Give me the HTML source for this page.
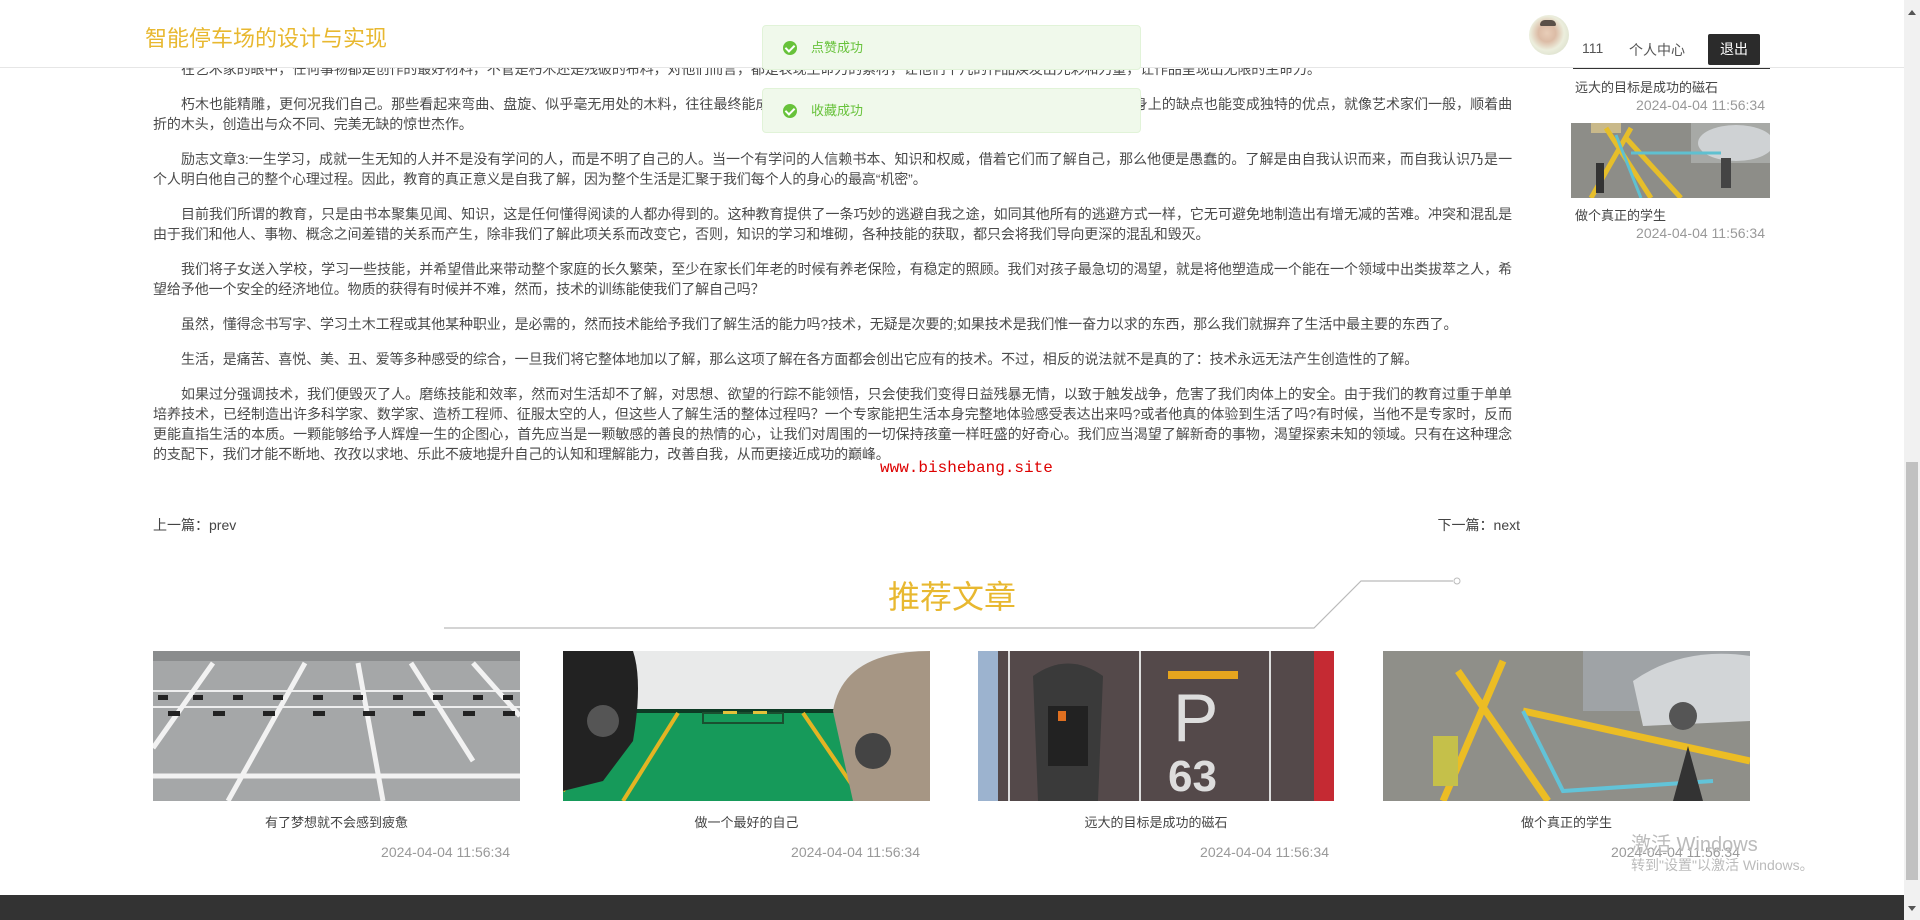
<!DOCTYPE html>
<html><head><meta charset="utf-8">
<style>
*{margin:0;padding:0;box-sizing:border-box}
body{width:1920px;height:920px;overflow:hidden;background:#fff;font-family:"Liberation Sans","Noto Sans CJK SC",sans-serif;position:relative;color:#444}
.hdr{position:absolute;left:0;top:0;width:1904px;height:68px;background:#fff;border-bottom:1px solid #e6e6e6;z-index:5}
.title{position:absolute;left:145px;top:21px;font-size:22px;color:#e8b830;letter-spacing:0}
.av{position:absolute;left:1529px;top:15px;width:40px;height:40px;border-radius:50%;background:radial-gradient(circle at 45% 45%,#e8cdb8 0,#dcbca6 28%,#eceedd 55%,#cfd5c0 100%);overflow:hidden}
.av:before{content:"";position:absolute;left:11px;top:5px;width:16px;height:6px;background:#5a5048;border-radius:8px 8px 2px 2px}
.u{position:absolute;top:40px;font-size:14px;color:#555}
.out{position:absolute;left:1708px;top:34px;width:52px;height:31px;background:#2b2b2b;color:#fff;font-size:14px;text-align:center;line-height:31px;border-radius:2px}
.toast{position:absolute;left:762px;width:379px;height:45px;background:#f0f9eb;border:1px solid #e1f3d8;border-radius:4px;z-index:10;font-size:13px;color:#67c23a;line-height:43px;padding-left:48px}
.toast i{position:absolute;left:20px;top:15px;width:14px;height:14px;border-radius:50%;background:#67c23a}
.toast i:after{content:"";position:absolute;left:4px;top:2px;width:4px;height:7px;border:solid #fff;border-width:0 2px 2px 0;transform:rotate(45deg)}
.content{position:absolute;left:153px;top:59px;width:1359px;font-size:14px;line-height:20px;color:#4a4a4a;text-align:justify;letter-spacing:-0.1px}
.content p{text-indent:2em;margin-bottom:15px}
.side{position:absolute;left:1570px;top:0;width:200px;font-size:13px;color:#444}
.red{position:absolute;left:880px;top:459px;font-family:"Liberation Mono",monospace;font-size:16px;color:#d00}
.nav{position:absolute;top:515px;font-size:14px;color:#444}
.rt{position:absolute;left:888px;top:577px;font-size:32px;color:#e8b830;line-height:40px}
.card{position:absolute;top:651px;height:150px;overflow:hidden}
.ct{position:absolute;top:812px;font-size:13px;color:#444;text-align:center}
.cd{position:absolute;top:844px;font-size:14px;color:#999;text-align:right}
.foot{position:absolute;left:0;top:895px;width:1904px;height:25px;background:#333}
.sb{position:absolute;left:1904px;top:0;width:16px;height:920px;background:#f1f1f1}
.th{position:absolute;left:1906px;top:462px;width:12px;height:418px;background:#c1c1c1}
.wm{position:absolute;left:1631px;color:#bbb}
</style></head><body>

<div class="content">
<p>在艺术家的眼中，任何事物都是创作的最好材料，不管是朽木还是残破的布料，对他们而言，都是表现生命力的素材，让他们平凡的作品焕发出光彩和力量，让作品呈现出无限的生命力。</p>
<p>朽木也能精雕，更何况我们自己。那些看起来弯曲、盘旋、似乎毫无用处的木料，往往最终能成为艺术家手中的珍品。对我们来说，只要用心雕琢，每个人身上的缺点也能变成独特的优点，就像艺术家们一般，顺着曲折的木头，创造出与众不同、完美无缺的惊世杰作。</p>
<p>励志文章3:一生学习，成就一生无知的人并不是没有学问的人，而是不明了自己的人。当一个有学问的人信赖书本、知识和权威，借着它们而了解自己，那么他便是愚蠢的。了解是由自我认识而来，而自我认识乃是一个人明白他自己的整个心理过程。因此，教育的真正意义是自我了解，因为整个生活是汇聚于我们每个人的身心的最高“机密”。</p>
<p>目前我们所谓的教育，只是由书本聚集见闻、知识，这是任何懂得阅读的人都办得到的。这种教育提供了一条巧妙的逃避自我之途，如同其他所有的逃避方式一样，它无可避免地制造出有增无减的苦难。冲突和混乱是由于我们和他人、事物、概念之间差错的关系而产生，除非我们了解此项关系而改变它，否则，知识的学习和堆砌，各种技能的获取，都只会将我们导向更深的混乱和毁灭。</p>
<p>我们将子女送入学校，学习一些技能，并希望借此来带动整个家庭的长久繁荣，至少在家长们年老的时候有养老保险，有稳定的照顾。我们对孩子最急切的渴望，就是将他塑造成一个能在一个领域中出类拔萃之人，希望给予他一个安全的经济地位。物质的获得有时候并不难，然而，技术的训练能使我们了解自己吗？</p>
<p>虽然，懂得念书写字、学习土木工程或其他某种职业，是必需的，然而技术能给予我们了解生活的能力吗?技术，无疑是次要的;如果技术是我们惟一奋力以求的东西，那么我们就摒弃了生活中最主要的东西了。</p>
<p>生活，是痛苦、喜悦、美、丑、爱等多种感受的综合，一旦我们将它整体地加以了解，那么这项了解在各方面都会创出它应有的技术。不过，相反的说法就不是真的了：技术永远无法产生创造性的了解。</p>
<p>如果过分强调技术，我们便毁灭了人。磨练技能和效率，然而对生活却不了解，对思想、欲望的行踪不能领悟，只会使我们变得日益残暴无情，以致于触发战争，危害了我们肉体上的安全。由于我们的教育过重于单单培养技术，已经制造出许多科学家、数学家、造桥工程师、征服太空的人，但这些人了解生活的整体过程吗？一个专家能把生活本身完整地体验感受表达出来吗?或者他真的体验到生活了吗?有时候，当他不是专家时，反而更能直指生活的本质。一颗能够给予人辉煌一生的企图心，首先应当是一颗敏感的善良的热情的心，让我们对周围的一切保持孩童一样旺盛的好奇心。我们应当渴望了解新奇的事物，渴望探索未知的领域。只有在这种理念的支配下，我们才能不断地、孜孜以求地、乐此不疲地提升自己的认知和理解能力，改善自我，从而更接近成功的巅峰。</p>
</div>
<div class="red">www.bishebang.site</div>

<div class="side">
<div style="position:absolute;left:3px;top:67px;width:197px;height:2px;background:#333"></div>
<div style="position:absolute;left:5px;top:77px">远大的目标是成功的磁石</div>
<div style="position:absolute;right:5px;top:97px;color:#999;font-size:14px">2024-04-04 11:56:34</div>
<svg style="position:absolute;left:1px;top:123px" width="199" height="75" viewBox="0 0 199 75">
<rect width="199" height="75" fill="#8d8d88"/><rect x="120" y="0" width="79" height="40" fill="#a7a9a6"/>
<ellipse cx="165" cy="20" rx="38" ry="18" fill="#cfd2d4"/><rect x="20" y="0" width="30" height="10" fill="#c9b98a"/>
<path d="M20 75 L60 5 M35 5 L80 75 M55 15 L110 75" stroke="#e6be2a" stroke-width="5" fill="none"/>
<path d="M45 12 L70 75 M60 30 L150 30" stroke="#5fc0d0" stroke-width="3" fill="none"/>
<rect x="25" y="40" width="8" height="30" fill="#333"/><rect x="150" y="35" width="10" height="30" fill="#444"/></svg>
<div style="position:absolute;left:5px;top:205px">做个真正的学生</div>
<div style="position:absolute;right:5px;top:225px;color:#999;font-size:14px">2024-04-04 11:56:34</div>
</div>

<div class="nav" style="left:153px">上一篇：prev</div>
<div class="nav" style="right:400px">下一篇：next</div>

<div class="rt">推荐文章</div>
<svg style="position:absolute;left:440px;top:575px" width="1030" height="60"><path d="M4 53 L874 53 L921 6 L1013 6" stroke="#bbb" stroke-width="1.2" fill="none"/><circle cx="1017" cy="6" r="3" fill="#fff" stroke="#bbb"/></svg>

<svg class="card" style="left:153px" width="367" height="150" viewBox="0 0 367 150">
<rect width="367" height="150" fill="#a5a7a8"/><rect width="367" height="10" fill="#8a8c8d"/>
<path d="M0 40 L367 40 M0 56 L367 56" stroke="#eee" stroke-width="2"/>
<path d="M0 97 L60 12 M75 150 L152 12 M230 150 L205 12 M320 110 L258 12 M367 65 L320 12 M0 125 L367 125" stroke="#f2f2f2" stroke-width="5" fill="none"/>
<g fill="#222"><rect x="5" y="44" width="10" height="5"/><rect x="40" y="44" width="10" height="5"/><rect x="80" y="44" width="10" height="5"/><rect x="120" y="44" width="10" height="5"/><rect x="160" y="44" width="10" height="5"/><rect x="200" y="44" width="10" height="5"/><rect x="240" y="44" width="10" height="5"/><rect x="280" y="44" width="10" height="5"/><rect x="320" y="44" width="10" height="5"/><rect x="350" y="44" width="10" height="5"/>
<rect x="15" y="60" width="12" height="5"/><rect x="60" y="60" width="12" height="5"/><rect x="110" y="60" width="12" height="5"/><rect x="160" y="60" width="12" height="5"/><rect x="210" y="60" width="12" height="5"/><rect x="260" y="60" width="12" height="5"/><rect x="310" y="60" width="12" height="5"/><rect x="350" y="60" width="12" height="5"/></g></svg>

<svg class="card" style="left:563px" width="367" height="150" viewBox="0 0 367 150">
<rect width="367" height="150" fill="#e9eaea"/><path d="M0 60 L367 60 L367 150 L0 150Z" fill="#169a5a"/>
<rect x="0" y="58" width="367" height="4" fill="#0d3a24"/>
<path d="M0 140 L50 62 M60 150 L115 62 M240 62 L300 150" stroke="#e3b423" stroke-width="4"/>
<rect x="140" y="62" width="80" height="10" fill="none" stroke="#1a5030" stroke-width="2"/><rect x="160" y="60" width="14" height="3" fill="#e3c23a"/><rect x="190" y="60" width="14" height="3" fill="#e3c23a"/>
<path d="M0 0 L70 0 Q80 30 70 90 L40 130 L0 140Z" fill="#222"/><path d="M290 150 L270 60 Q280 0 367 0 L367 150Z" fill="#a69684"/><circle cx="310" cy="100" r="18" fill="#444"/><circle cx="40" cy="70" r="16" fill="#555"/></svg>

<svg class="card" style="left:978px" width="356" height="150" viewBox="0 0 356 150">
<rect width="356" height="150" fill="#54494a"/>
<path d="M31 0 V150 M162 0 V150 M292 0 V150" stroke="#ddd" stroke-width="2"/>
<rect x="0" y="0" width="20" height="150" fill="#9cb3cf"/><rect x="336" y="0" width="20" height="150" fill="#c52a33"/>
<path d="M60 150 L55 25 Q90 0 125 25 L120 150Z" fill="#3a3a3a"/><rect x="70" y="55" width="40" height="60" fill="#222"/><rect x="80" y="60" width="8" height="10" fill="#e07020"/>
<rect x="190" y="20" width="70" height="8" fill="#e6a51e"/>
<text x="195" y="90" font-family="Liberation Sans" font-size="68" fill="#ddd">P</text><text x="190" y="140" font-family="Liberation Sans" font-size="44" font-weight="bold" fill="#ddd">63</text></svg>

<svg class="card" style="left:1383px" width="367" height="150" viewBox="0 0 367 150">
<rect width="367" height="150" fill="#8f8f89"/><rect x="200" y="0" width="167" height="60" fill="#9fa3a6"/>
<path d="M250 30 Q300 -5 367 5 L367 70 L260 75Z" fill="#d2d5d7"/><circle cx="300" cy="65" r="14" fill="#555"/>
<path d="M60 150 L120 10 M75 20 L165 150 M140 60 L367 110" stroke="#ecbd24" stroke-width="7" fill="none"/>
<path d="M140 60 L180 140 L330 130" stroke="#62c3d8" stroke-width="4" fill="none"/>
<rect x="50" y="85" width="25" height="50" fill="#c5c04a"/><path d="M290 150 L305 95 L320 150Z" fill="#333"/></svg>

<div class="ct" style="left:153px;width:367px">有了梦想就不会感到疲惫</div>
<div class="ct" style="left:563px;width:367px">做一个最好的自己</div>
<div class="ct" style="left:978px;width:356px">远大的目标是成功的磁石</div>
<div class="ct" style="left:1383px;width:367px">做个真正的学生</div>
<div class="cd" style="left:153px;width:357px">2024-04-04 11:56:34</div>
<div class="cd" style="left:563px;width:357px">2024-04-04 11:56:34</div>
<div class="cd" style="left:978px;width:351px">2024-04-04 11:56:34</div>
<div class="cd" style="left:1383px;width:357px">2024-04-04 11:56:34</div>

<div class="wm" style="top:828px;font-size:20px">激活 Windows</div>
<div class="wm" style="top:855px;font-size:14px">转到"设置"以激活 Windows。</div>

<div class="foot"></div>

<div class="hdr">
<div class="title">智能停车场的设计与实现</div>
<div class="av"></div>
<div class="u" style="left:1582px">111</div>
<div class="u" style="left:1629px">个人中心</div>
<div class="out">退出</div>
</div>

<div class="toast" style="top:25px"><i></i>点赞成功</div>
<div class="toast" style="top:88px"><i></i>收藏成功</div>

<div class="sb"></div><div class="th"></div>
<div style="position:absolute;left:1908px;top:10px;width:0;height:0;border:4px solid transparent;border-bottom:5px solid #555;border-top:0"></div>
<div style="position:absolute;left:1908px;top:906px;width:0;height:0;border:4px solid transparent;border-top:5px solid #555;border-bottom:0"></div>
</body></html>
